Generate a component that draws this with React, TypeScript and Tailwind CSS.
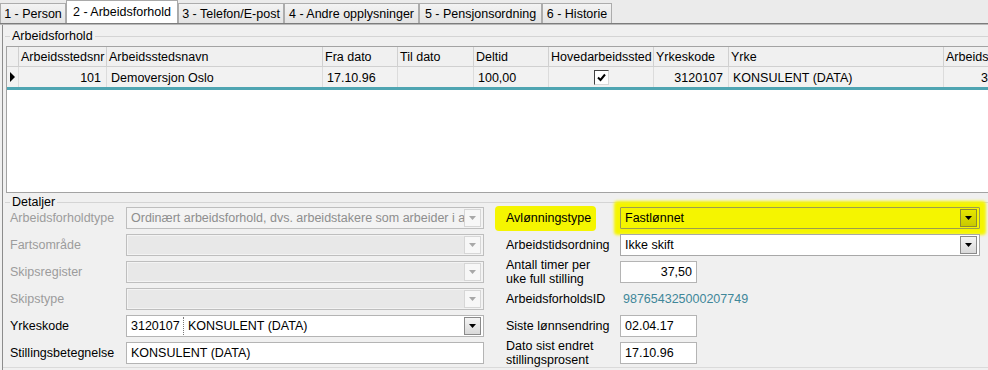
import React from "react";

const tabs = [
  { t: "1 - Person", w: "w-[66px]" },
  { t: "2 - Arbeidsforhold", w: "w-[112px]", active: true },
  { t: "3 - Telefon/E-post", w: "w-[106px]" },
  { t: "4 - Andre opplysninger", w: "w-[135px]" },
  { t: "5 - Pensjonsordning", w: "w-[123px]" },
  { t: "6 - Historie", w: "w-[70px]" },
];

type Col = { label: string; w: string; v?: string; right?: boolean; check?: boolean };

const cols: Col[] = [
  { label: "Arbeidsstedsnr", w: "w-[88px]", v: "101", right: true },
  { label: "Arbeidsstedsnavn", w: "w-[216px]", v: "Demoversjon Oslo" },
  { label: "Fra dato", w: "w-[75px]", v: "17.10.96" },
  { label: "Til dato", w: "w-[76px]", v: "" },
  { label: "Deltid", w: "w-[75px]", v: "100,00" },
  { label: "Hovedarbeidssted", w: "w-[105px]", check: true },
  { label: "Yrkeskode", w: "w-[75px]", v: "3120107", right: true },
  { label: "Yrke", w: "w-[215px]", v: "KONSULENT (DATA)" },
  { label: "Arbeidssted", w: "w-[50px]", v: "3", right: true },
];

function Arrow({ color }: { color: string }) {
  return (
    <svg width="7" height="4" viewBox="0 0 7 4">
      <path d="M0 0H7L3.5 4Z" fill={color} />
    </svg>
  );
}

function DropBtn({ enabled, yellow }: { enabled?: boolean; yellow?: boolean }) {
  if (yellow)
    return (
      <div className="w-[17px] h-[18px] mr-[1px] border border-[#8c8c30] bg-gradient-to-b from-[#e6e600] to-[#c9c900] flex items-center justify-center">
        <Arrow color="#000" />
      </div>
    );
  if (enabled)
    return (
      <div className="w-[17px] h-[18px] mr-[1px] border border-[#8a8a8a] bg-gradient-to-b from-[#f4f4f4] to-[#d9d9d9] flex items-center justify-center">
        <Arrow color="#000" />
      </div>
    );
  return (
    <div className="w-[17px] h-[18px] mr-[1px] border border-[#d6d6d6] bg-[#f7f7f7] flex items-center justify-center">
      <Arrow color="#a8a8a8" />
    </div>
  );
}

function DisabledCombo({ text }: { text?: string }) {
  return (
    <div className="w-[358px] h-[22px] border border-[#bebebe] bg-[#f3f3f3] flex items-center p-[1px]">
      <div
        className={
          "flex-1 h-full flex items-center overflow-hidden whitespace-nowrap pl-[3px] text-[#8e8e8e] " +
          (text ? "bg-[#f3f3f3]" : "bg-[#e8e8e8]")
        }
      >
        {text}
      </div>
      <DropBtn />
    </div>
  );
}

function TextBox({ children, w, right }: { children: React.ReactNode; w: string; right?: boolean }) {
  return (
    <div
      className={
        "h-[22px] border border-[#b4b4b4] bg-white flex items-center px-[4px] whitespace-nowrap " +
        w +
        (right ? " justify-end" : "")
      }
    >
      {children}
    </div>
  );
}

function Label({ children, disabled }: { children: React.ReactNode; disabled?: boolean }) {
  return (
    <div className={"flex items-center whitespace-nowrap " + (disabled ? "text-[#9c9c9c]" : "text-black")}>{children}</div>
  );
}

export default function App() {
  return (
    <div className="w-[988px] h-[370px] overflow-hidden bg-[#f0f0f0] text-[12.5px] leading-[14px] text-black font-['Liberation_Sans',Arial,sans-serif]">
      {/* Tabs */}
      <div className="flex h-[23px] items-end bg-[#ebebeb]">
        {tabs.map((t) =>
          t.active ? (
            <div
              key={t.t}
              className={t.w + " h-[23px] bg-white border border-b-0 border-[#a9a9a9] flex items-center justify-center pb-[1px] whitespace-nowrap"}
            >
              {t.t}
            </div>
          ) : (
            <div
              key={t.t}
              className={
                t.w +
                " h-[20px] bg-gradient-to-b from-[#f3f3f3] to-[#e3e3e3] border border-b-0 border-[#acacac] flex items-center justify-center pt-[1px] whitespace-nowrap"
              }
            >
              {t.t}
            </div>
          )
        )}
      </div>
      <div className="h-[1px] bg-[#7c7c7c]" />
      <div className="h-[1px] bg-[#b9b9b9]" />

      {/* Page */}
      <div className="ml-[2px] border-l border-[#8c8c8c] h-[345px] flex flex-col">
        {/* Arbeidsforhold group title */}
        <div className="mt-[5px] h-[13px] flex items-center">
          <div className="ml-[2px] w-[5px] border-t border-[#d4d4d4]" />
          <span className="px-[2px] leading-[13px]">Arbeidsforhold</span>
          <div className="flex-1 border-t border-[#d4d4d4]" />
        </div>

        {/* Grid */}
        <div className="mt-[3px] ml-[3px] h-[147px] border-l border-t border-b border-[#a3a3a3] bg-white overflow-hidden">
          <div className="flex h-[20px] bg-[#f0f0f0] border-b border-[#d0d0d0]">
            <div className="w-[12px] shrink-0 border-r border-[#d0d0d0]" />
            {cols.map((c) => (
              <div
                key={c.label}
                className={c.w + " shrink-0 border-r border-[#d0d0d0] pl-[2px] pt-[1px] flex items-center overflow-hidden whitespace-nowrap"}
              >
                {c.label}
              </div>
            ))}
          </div>
          <div className="flex h-[20px] bg-[#f2f2f2]">
            <div className="w-[12px] shrink-0 border-r border-[#dcdcdc] flex items-center pl-[3px]">
              <svg width="5" height="10" viewBox="0 0 5 10">
                <path d="M0 0L5 5L0 10Z" fill="#000" />
              </svg>
            </div>
            {cols.map((c) => (
              <div
                key={c.label}
                className={
                  c.w +
                  " shrink-0 border-r border-[#dcdcdc] flex items-center overflow-hidden whitespace-nowrap pt-[2px] " +
                  (c.check ? "justify-center" : c.right ? "justify-end pr-[5px]" : "pl-[4px]")
                }
              >
                {c.check ? (
                  <div className="-mt-[2px] w-[15px] h-[15px] bg-white border-l border-t border-[#404040] border-r border-b border-r-[#d8d8d8] border-b-[#d8d8d8] flex items-center justify-center">
                    <svg width="9" height="9" viewBox="0 0 9 9">
                      <path d="M1 4.5L3.5 7L8 1.5" stroke="#000" strokeWidth="2" fill="none" />
                    </svg>
                  </div>
                ) : (
                  c.v
                )}
              </div>
            ))}
          </div>
          <div className="h-[3px] bg-[#4fa5b2]" />
        </div>

        {/* Detaljer group title */}
        <div className="mt-[3px] h-[11px] flex items-start">
          <div className="mt-[6px] ml-[2px] w-[5px] border-t border-[#d4d4d4]" />
          <span className="px-[2px] leading-[13px]">Detaljer</span>
          <div className="mt-[6px] flex-1 border-t border-[#d4d4d4]" />
        </div>

        {/* Detail fields */}
        <div className="flex pl-[7px]">
          {/* Left column */}
          <div className="grid grid-cols-[116px_358px] auto-rows-[22px] gap-y-[5px]">
            <Label disabled>Arbeidsforholdtype</Label>
            <DisabledCombo text="Ordinært arbeidsforhold, dvs. arbeidstakere som arbeider i arbeidsgivers virksomhet" />
            <Label disabled>Fartsområde</Label>
            <DisabledCombo />
            <Label disabled>Skipsregister</Label>
            <DisabledCombo />
            <Label disabled>Skipstype</Label>
            <DisabledCombo />
            <Label>Yrkeskode</Label>
            <div className="w-[358px] h-[22px] border border-[#b4b4b4] bg-white flex items-center p-[1px]">
              <div className="w-[55px] pl-[3px]">3120107</div>
              <div className="h-[18px] border-l border-dotted border-[#7a7a7a]" />
              <div className="flex-1 pl-[4px] whitespace-nowrap">KONSULENT (DATA)</div>
              <DropBtn enabled />
            </div>
            <Label>Stillingsbetegnelse</Label>
            <TextBox w="w-[358px]">KONSULENT (DATA)</TextBox>
          </div>

          {/* Right column */}
          <div className="ml-[22px] grid grid-cols-[114px_360px] auto-rows-[22px] gap-y-[5px]">
            <div className="flex items-center">
              <span className="-ml-[11px] pl-[11px] pr-[5px] h-[25px] flex items-center bg-[#f5f500] rounded-[4px] whitespace-nowrap">
                Avlønningstype
              </span>
            </div>
            <div className="w-[360px] h-[22px] border border-[#9c9c50] bg-[#f5f500] flex items-center p-[1px] shadow-[0_0_3px_6px_#f5f500] rounded-[1px]">
              <div className="flex-1 pl-[3px]">Fastlønnet</div>
              <DropBtn yellow />
            </div>

            <Label>Arbeidstidsordning</Label>
            <div className="w-[360px] h-[22px] border border-[#a8a8a8] bg-white flex items-center p-[1px]">
              <div className="flex-1 pl-[3px]">Ikke skift</div>
              <DropBtn enabled />
            </div>

            <div className="flex flex-col justify-center whitespace-nowrap">
              <div>Antall timer per</div>
              <div>uke full stilling</div>
            </div>
            <div>
              <TextBox w="w-[77px]" right>
                37,50
              </TextBox>
            </div>

            <Label>ArbeidsforholdsID</Label>
            <div className="flex items-center pl-[3px] text-[#3f8799]">987654325000207749</div>

            <Label>Siste lønnsendring</Label>
            <div>
              <TextBox w="w-[77px]">02.04.17</TextBox>
            </div>

            <div className="flex flex-col justify-center whitespace-nowrap">
              <div>Dato sist endret</div>
              <div>stillingsprosent</div>
            </div>
            <div>
              <TextBox w="w-[77px]">17.10.96</TextBox>
            </div>
          </div>
        </div>

        <div className="mt-[3px] border-t border-[#dadada]" />
      </div>
    </div>
  );
}
